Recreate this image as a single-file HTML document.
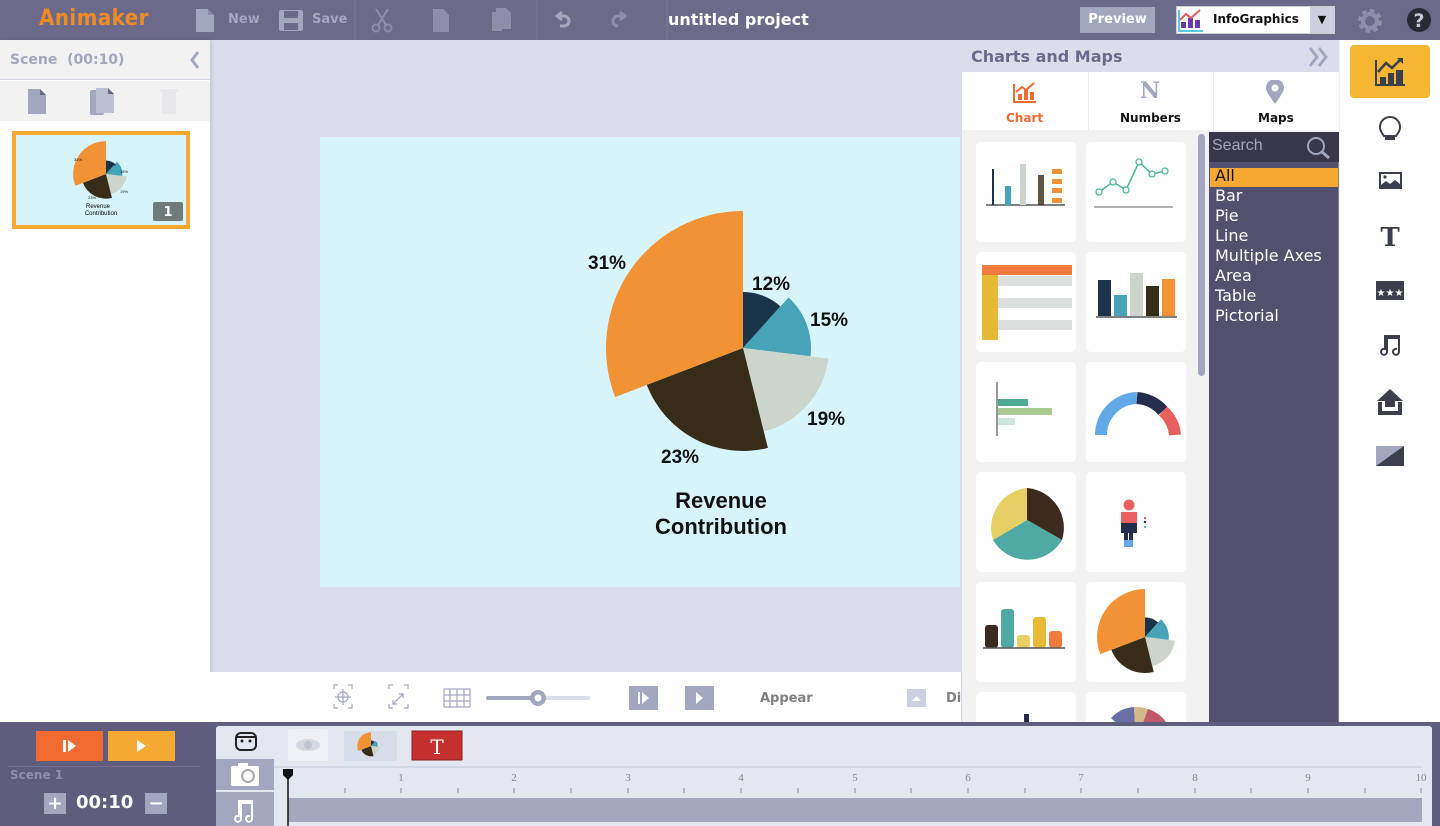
<!DOCTYPE html>
<html><head><meta charset="utf-8"><style>
*{margin:0;padding:0;box-sizing:border-box}
body{width:1440px;height:826px;overflow:hidden;position:relative;font-family:"DejaVu Sans","Liberation Sans",sans-serif;background:#dadeea}
.a{position:absolute}
.b{font-weight:bold}
</style></head><body>
<!-- top bar -->
<div class="a" style="left:0;top:0;width:1440px;height:40px;background:#6c6a8a"></div>
<div class="a b" style="left:39px;top:6px;font-size:22px;color:#f08a24;font-family:'DejaVu Sans Condensed','DejaVu Sans',sans-serif;letter-spacing:0.5px">Animaker</div>
<svg class="a" style="left:190px;top:0" width="480" height="40">
 <path d="M6 9h12l6 6v17H6z" fill="#a3a6bf"/><path d="M18 9l6 6h-6z" fill="#8a8ca8"/>
 <rect x="89" y="10" width="24" height="21" rx="2" fill="#a3a6bf"/><rect x="94" y="11" width="14" height="7" fill="#6c6a8a"/><rect x="94" y="23" width="14" height="7" fill="#6c6a8a"/>
 <line x1="165" y1="0" x2="165" y2="40" stroke="#7b7998"/>
 <path d="M186 9l10 16M198 9l-10 16" stroke="#8e8daa" stroke-width="2"/><circle cx="186" cy="28" r="3.5" fill="none" stroke="#8e8daa" stroke-width="2"/><circle cx="198" cy="28" r="3.5" fill="none" stroke="#8e8daa" stroke-width="2"/>
 <path d="M243 9h10l6 6v17h-16z" fill="#8e8daa"/>
 <path d="M306 8h10l5 5v16h-15z" fill="#8e8daa"/><path d="M302 12h10v19h-10z" fill="#8e8daa"/>
 <line x1="347" y1="0" x2="347" y2="40" stroke="#7b7998"/>
 <path d="M372 12l-5 4 5 4M367 16h7a5 5 0 0 1 0 10h-4" fill="none" stroke="#a3a6bf" stroke-width="3"/>
 <path d="M430 12l5 4-5 4M435 16h-7a5 5 0 0 0 0 10h0" fill="none" stroke="#8e8daa" stroke-width="3"/>
 <line x1="477" y1="0" x2="477" y2="40" stroke="#7b7998"/>
</svg>
<div class="a b" style="left:228px;top:12px;font-size:13px;color:#a3a6bf">New</div>
<div class="a b" style="left:312px;top:12px;font-size:13px;color:#a3a6bf">Save</div>
<div class="a b" style="left:668px;top:10px;font-size:16px;color:#fff">untitled project</div>
<div class="a b" style="left:1080px;top:7px;width:75px;height:26px;background:#a3a6bf;color:#fff;font-size:13px;text-align:center;line-height:26px">Preview</div>
<div class="a" style="left:1176px;top:6px;width:159px;height:28px;background:#fff;border:1px solid #ccc"></div>
<svg class="a" style="left:1178px;top:8px" width="26" height="24"><rect x="3" y="14" width="5" height="6" fill="#6a3aa8"/><rect x="10" y="10" width="5" height="10" fill="#6a3aa8"/><rect x="17" y="12" width="5" height="8" fill="#6a3aa8"/><path d="M2 12l6-6 5 4 9-8" fill="none" stroke="#e85a5a" stroke-width="2"/><path d="M1 2v21h24" fill="none" stroke="#5ac8e0" stroke-width="2"/></svg>
<div class="a b" style="left:1213px;top:12px;font-size:12px;color:#111">InfoGraphics</div>
<div class="a" style="left:1310px;top:7px;width:24px;height:26px;background:#ccd0de;font-size:11px;text-align:center;line-height:26px;color:#111">▼</div>
<svg class="a" style="left:1356px;top:7px" width="28" height="28"><circle cx="14" cy="14" r="9" fill="none" stroke="#8e8daa" stroke-width="6" stroke-dasharray="4 3"/><circle cx="14" cy="14" r="7" fill="none" stroke="#8e8daa" stroke-width="4"/></svg>
<svg class="a" style="left:1405px;top:6px" width="28" height="28"><circle cx="14" cy="14" r="12" fill="#2a2a35"/><text x="14" y="21" text-anchor="middle" font-family="DejaVu Sans" font-weight="bold" font-size="19" fill="#c8c8d6">?</text></svg>

<!-- left panel -->
<div class="a" style="left:0;top:40px;width:210px;height:682px;background:#fff;box-shadow:2px 0 4px rgba(0,0,0,.1)"></div>
<div class="a" style="left:0;top:40px;width:210px;height:40px;background:#f2f2f2;border-bottom:1px solid #d5d9e6"></div>
<div class="a b" style="left:10px;top:52px;font-size:14px;color:#a3a6bf">Scene&nbsp;&nbsp;(00:10)</div>
<svg class="a" style="left:188px;top:50px" width="14" height="20"><path d="M10 2L4 10l6 8" fill="none" stroke="#a3a6bf" stroke-width="3"/></svg>
<div class="a" style="left:0;top:81px;width:210px;height:40px;background:#f2f2f2"></div>
<svg class="a" style="left:0;top:81px" width="210" height="40"><path d="M28 8h12l6 6v19H28z" fill="#a3a6bf"/><path d="M40 8l6 6h-6z" fill="#6c6a8a"/><rect x="90" y="9" width="14" height="25" rx="2" fill="#a3a6bf"/><path d="M96 7h12l6 6v19H96z" fill="#bcc0d3"/><path d="M108 7l6 6h-6z" fill="#6c6a8a"/><rect x="162" y="10" width="14" height="23" fill="#e8e8ea"/><rect x="160" y="8" width="18" height="3" fill="#e8e8ea"/></svg>
<div class="a" style="left:12px;top:131px;width:178px;height:98px;border:4px solid #f5a832;background:#d6f4fa"></div>
<svg class="a" style="left:16px;top:135px" width="170" height="90" viewBox="0 0 170 90">
<g transform="translate(90,39) scale(0.24) translate(-743,-348)">
 <path d="M743 348L743 292A56 56 0 0 1 780.5 306.4Z" fill="#1c344b"/>
 <path d="M743 348L788.5 297.5A68 68 0 0 1 810.5 356.3Z" fill="#47a4b8"/>
 <path d="M743 348L828.4 358.5A86 86 0 0 1 763.8 431.4Z" fill="#ccd5cc"/>
 <path d="M743 348L767.9 447.9A103 103 0 0 1 646.8 384.9Z" fill="#372c17"/>
 <path d="M743 348L615.1 397.1A137 137 0 0 1 743 211Z" fill="#f19235"/>
</g>
<g font-size="4" font-family="Liberation Sans" fill="#111"><text x="58" y="26">31%</text><text x="92" y="31">12%</text><text x="104" y="38">15%</text><text x="104" y="58">19%</text><text x="72" y="64">23%</text></g>
<text x="82" y="73" font-size="6" text-anchor="middle" font-family="Liberation Sans">Revenue</text><text x="85" y="80" font-size="6" text-anchor="middle" font-family="Liberation Sans">Contribution</text>
<rect x="137" y="67" width="30" height="19" rx="2" fill="#6f7a7a"/><text x="152" y="81" font-size="13" font-weight="bold" fill="#fff" text-anchor="middle">1</text>
</svg>

<!-- stage -->
<div class="a" style="left:320px;top:137px;width:640px;height:450px;background:#d6f4fa"></div>
<svg class="a" style="left:0;top:0" width="960" height="600">
 <path d="M743 348L743 292A56 56 0 0 1 780.5 306.4Z" fill="#1c344b"/>
 <path d="M743 348L788.5 297.5A68 68 0 0 1 810.5 356.3Z" fill="#47a4b8"/>
 <path d="M743 348L828.4 358.5A86 86 0 0 1 763.8 431.4Z" fill="#ccd5cc"/>
 <path d="M743 348L767.9 447.9A103 103 0 0 1 646.8 384.9Z" fill="#372c17"/>
 <path d="M743 348L615.1 397.1A137 137 0 0 1 743 211Z" fill="#f19235"/>
 <g font-family="Liberation Sans" font-weight="bold" fill="#111" font-size="19">
 <text x="588" y="269">31%</text><text x="752" y="290">12%</text><text x="810" y="326">15%</text><text x="807" y="425">19%</text><text x="661" y="463">23%</text>
 <text x="721" y="508" text-anchor="middle" font-size="22">Revenue</text><text x="721" y="534" text-anchor="middle" font-size="22">Contribution</text></g>
</svg>

<!-- canvas bottom toolbar -->
<div class="a" style="left:210px;top:672px;width:751px;height:50px;background:#fff"></div>
<svg class="a" style="left:320px;top:680px" width="640" height="36">
 <g fill="none" stroke="#a3a6bf" stroke-width="1.2"><path d="M14 9v-4h4M28 5h4v4M32 24v4h-4M18 28h-4v-4"/><circle cx="23" cy="17" r="5"/><path d="M23 9v16M15 17h16"/>
 <path d="M69 9v-4h4M84 5h4v4M88 24v4h-4M73 28h-4v-4M73 24l10-10M79 14h4v4M73 20v4h4"/>
 <path d="M124 9h26v18h-26zM124 15h26M124 21h26M130 9v18M137 9v18M144 9v18"/></g>
 <line x1="168" y1="18" x2="268" y2="18" stroke="#dadeea" stroke-width="4" stroke-linecap="round"/><line x1="168" y1="18" x2="218" y2="18" stroke="#a3a6bf" stroke-width="4" stroke-linecap="round"/>
 <circle cx="218" cy="18" r="8" fill="#a3a6bf"/><circle cx="218" cy="18" r="3.5" fill="#fff"/>
 <rect x="309" y="6" width="29" height="24" fill="#a3a6bf"/><rect x="318" y="12" width="2" height="12" fill="#fff"/><path d="M322 12l7 6-7 6z" fill="#fff"/>
 <rect x="365" y="6" width="29" height="24" fill="#a3a6bf"/><path d="M376 12l7 6-7 6z" fill="#fff"/>
 <rect x="587" y="9" width="19" height="18" fill="#ccd0de"/><path d="M592 21l4.5-5 4.5 5z" fill="#fff"/>
</svg>
<div class="a b" style="left:760px;top:691px;font-size:13px;color:#808080">Appear</div>
<div class="a b" style="left:946px;top:691px;font-size:13px;color:#808080">Di</div>

<!-- charts panel -->
<div class="a" style="left:961px;top:40px;width:379px;height:682px;background:#f2f2f2;border-left:1px solid #d5d9e6"></div>
<div class="a" style="left:961px;top:40px;width:378px;height:32px;background:#dadeea"></div>
<div class="a b" style="left:971px;top:47px;font-size:16px;color:#6c6a8a">Charts and Maps</div>
<svg class="a" style="left:1307px;top:46px" width="24" height="22"><path d="M3 2l7 9-7 9M12 2l7 9-7 9" fill="none" stroke="#a3a6bf" stroke-width="3"/></svg>
<div class="a" style="left:962px;top:72px;width:377px;height:58px;background:#fff"></div>
<div class="a" style="left:1088px;top:72px;width:1px;height:58px;background:#eaeaea"></div>
<div class="a" style="left:1213px;top:72px;width:1px;height:58px;background:#eaeaea"></div>
<svg class="a" style="left:1012px;top:80px" width="26" height="24"><path d="M2 4v18h22" fill="none" stroke="#ef6b30" stroke-width="2"/><rect x="6" y="14" width="4" height="6" fill="#ef6b30"/><rect x="12" y="10" width="4" height="10" fill="#ef6b30"/><rect x="18" y="12" width="4" height="8" fill="#ef6b30"/><path d="M4 12l6-5 4 3 8-7" fill="none" stroke="#ef6b30" stroke-width="2"/></svg>
<div class="a b" style="left:1006px;top:111px;font-size:12px;color:#ef6b30">Chart</div>
<div class="a b" style="left:1140px;top:78px;font-size:22px;color:#a3a6bf;font-family:'DejaVu Serif',serif">N</div>
<div class="a b" style="left:1120px;top:111px;font-size:12px;color:#111">Numbers</div>
<svg class="a" style="left:1264px;top:80px" width="22" height="26"><path d="M11 24C4 14 2 11 2 8a9 9 0 0 1 18 0c0 3-2 6-9 16z" fill="#a3a6bf"/><circle cx="11" cy="8" r="3.5" fill="#fff"/></svg>
<div class="a b" style="left:1258px;top:111px;font-size:12px;color:#111">Maps</div>

<div class="a" style="left:1198px;top:134px;width:7px;height:242px;border-radius:4px;background:#a3a6bf"></div>
<svg class="a" style="left:976px;top:142px" width="210" height="580">
 <g fill="#fff"><rect x="0" y="0" width="100" height="100" rx="5"/><rect x="110" y="0" width="100" height="100" rx="5"/>
 <rect x="0" y="110" width="100" height="100" rx="5"/><rect x="110" y="110" width="100" height="100" rx="5"/>
 <rect x="0" y="220" width="100" height="100" rx="5"/><rect x="110" y="220" width="100" height="100" rx="5"/>
 <rect x="0" y="330" width="100" height="100" rx="5"/><rect x="110" y="330" width="100" height="100" rx="5"/>
 <rect x="0" y="440" width="100" height="100" rx="5"/><rect x="110" y="440" width="100" height="100" rx="5"/>
 <rect x="0" y="550" width="100" height="100" rx="5"/><rect x="110" y="550" width="100" height="100" rx="5"/></g>
 <line x1="10" y1="63" x2="89" y2="63" stroke="#555" stroke-width="1.5"/>
 <rect x="16" y="27" width="2" height="36" fill="#1c344b"/><rect x="29" y="44" width="6" height="19" fill="#47a4b8"/><rect x="44" y="22" width="6" height="41" fill="#ccd5cc"/><rect x="62" y="33" width="6" height="30" fill="#372c17" opacity=".8"/>
 <g fill="#f19235"><rect x="76" y="27" width="10" height="5"/><rect x="76" y="37" width="10" height="5"/><rect x="76" y="46" width="10" height="5"/><rect x="76" y="56" width="10" height="5"/></g>
 <line x1="118" y1="65" x2="197" y2="65" stroke="#999" stroke-width="1.5"/>
 <polyline points="123,50 137,40 150,48 163,20 176,32 189,29" fill="none" stroke="#4fb89a" stroke-width="1.5"/>
 <g fill="#fff" stroke="#4fb89a" stroke-width="1.3"><circle cx="123" cy="50" r="3"/><circle cx="137" cy="40" r="3"/><circle cx="150" cy="48" r="3"/><circle cx="163" cy="20" r="3"/><circle cx="176" cy="32" r="3"/><circle cx="189" cy="29" r="3"/></g>
 <rect x="6" y="123" width="90" height="10" fill="#ef7b3e"/><rect x="6" y="133" width="16" height="65" fill="#e8b934"/>
 <g fill="#dbe0de"><rect x="22" y="134" width="74" height="10"/><rect x="22" y="156" width="74" height="10"/><rect x="22" y="178" width="74" height="10"/></g>
 <rect x="122" y="138" width="13" height="36" fill="#1c344b"/><rect x="138" y="153" width="13" height="21" fill="#47a4b8"/><rect x="154" y="131" width="13" height="43" fill="#ccd5cc"/><rect x="170" y="144" width="13" height="30" fill="#372c17"/><rect x="186" y="137" width="13" height="37" fill="#f19235"/>
 <line x1="120" y1="175" x2="201" y2="175" stroke="#555" stroke-width="1.5"/>
 <line x1="21" y1="240" x2="21" y2="294" stroke="#777" stroke-width="1.5"/><rect x="22" y="257" width="30" height="7" fill="#4fa890"/><rect x="22" y="266" width="54" height="7" fill="#a8c98f"/><rect x="22" y="276" width="17" height="7" fill="#cde5df"/>
 <path d="M125 293A37 37 0 0 1 161 256" fill="none" stroke="#63a8e6" stroke-width="12"/><path d="M161 256A37 37 0 0 1 187 269" fill="none" stroke="#262c4b" stroke-width="12"/><path d="M187 269A37 37 0 0 1 199 293" fill="none" stroke="#e85f5f" stroke-width="12"/>
 <path d="M51 378L51 346A40 40 0 0 1 86 398Z" fill="#3c2a1f"/><path d="M51 378L86 398A40 40 0 0 1 17 398Z" fill="#4fa9a3"/><path d="M51 378L17 398A40 40 0 0 1 51 346Z" fill="#e6cf63"/>
 <circle cx="153" cy="363" r="5.5" fill="#e86060"/><rect x="145" y="370" width="16" height="11" fill="#e86060"/><rect x="145" y="381" width="16" height="10" fill="#262c4b"/><rect x="148" y="391" width="4" height="12" fill="#262c4b"/><rect x="153" y="391" width="4" height="12" fill="#262c4b"/><rect x="148" y="398" width="9" height="7" fill="#63a8e6"/>
 <circle cx="169" cy="376" r="1.2" fill="#e86060"/><circle cx="169" cy="380" r="1.2" fill="#262c4b"/><circle cx="169" cy="385" r="1.2" fill="#63a8e6"/>
 <g><rect x="9" y="483" width="13" height="23" rx="3" fill="#3c2a1f"/><rect x="25" y="467" width="13" height="39" rx="3" fill="#4fa9a3"/><rect x="41" y="493" width="13" height="13" rx="3" fill="#e6cf63"/><rect x="57" y="475" width="13" height="31" rx="3" fill="#e8b934"/><rect x="73" y="489" width="13" height="17" rx="3" fill="#ef7b3e"/></g>
 <line x1="7" y1="506" x2="89" y2="506" stroke="#555" stroke-width="1.5"/>
 <g transform="translate(169,495) scale(0.35) translate(-743,-348)">
 <path d="M743 348L743 292A56 56 0 0 1 780.5 306.4Z" fill="#1c344b"/><path d="M743 348L788.5 297.5A68 68 0 0 1 810.5 356.3Z" fill="#47a4b8"/><path d="M743 348L828.4 358.5A86 86 0 0 1 763.8 431.4Z" fill="#ccd5cc"/><path d="M743 348L767.9 447.9A103 103 0 0 1 646.8 384.9Z" fill="#372c17"/><path d="M743 348L615.1 397.1A137 137 0 0 1 743 211Z" fill="#f19235"/></g>
 <rect x="48" y="572" width="5" height="10" fill="#262c4b"/>
 <path d="M160 600L135 576A35 35 0 0 1 158 565Z" fill="#6870a3"/><path d="M160 600L158 565A35 35 0 0 1 172 567Z" fill="#d4b88a"/><path d="M160 600L172 567A35 35 0 0 1 190 580Z" fill="#c05a6a"/>
</svg>

<!-- category list -->
<div class="a" style="left:1209px;top:132px;width:130px;height:590px;background:#52506e;border-right:1px solid #888"></div>
<div class="a" style="left:1209px;top:132px;width:130px;height:30px;background:#37364a"></div>
<div class="a" style="left:1212px;top:137px;font-size:16px;color:#a3a6bf;font-family:'Liberation Sans',sans-serif">Search</div>
<svg class="a" style="left:1306px;top:136px" width="26" height="24"><circle cx="10" cy="10" r="8" fill="none" stroke="#a3a6bf" stroke-width="2"/><path d="M16 16l7 6" stroke="#a3a6bf" stroke-width="3"/></svg>
<div class="a" style="left:1210px;top:168px;width:128px;height:19px;background:#f5a832"></div>
<div class="a" style="left:1215px;top:166px;font-size:16px;line-height:20px;color:#fff;font-family:'DejaVu Sans',sans-serif">
<div style="color:#111">All</div><div>Bar</div><div>Pie</div><div>Line</div><div>Multiple Axes</div><div>Area</div><div>Table</div><div>Pictorial</div></div>

<!-- right sidebar -->
<div class="a" style="left:1340px;top:40px;width:100px;height:682px;background:#fff"></div>
<div class="a" style="left:1350px;top:45px;width:80px;height:53px;background:#f5b731;border-radius:4px"></div>
<svg class="a" style="left:1340px;top:40px" width="100" height="440">
 <g fill="#3a3f4b">
 <path d="M35 20v26h30v-2H37V20z"/><rect x="40" y="37" width="6" height="7"/><rect x="48" y="33" width="6" height="11"/><rect x="56" y="30" width="7" height="14"/>
 </g>
 <path d="M38 32l8-9 6 5 9-9" fill="none" stroke="#3a3f4b" stroke-width="2.5"/><path d="M57 18h6v6z" fill="#3a3f4b"/>
 <path d="M44 96c-3-4-4-6-4-9a10 10 0 0 1 20 0c0 3-1 5-4 9z" fill="none" stroke="#3a3f4b" stroke-width="2"/><rect x="45" y="96" width="10" height="4" fill="#3a3f4b"/>
 <rect x="39" y="132" width="23" height="17" fill="#3a3f4b"/><path d="M41 134h19v10l-5-4-5 4-4-3-5 4z" fill="#fff"/><circle cx="45" cy="137" r="1.6" fill="#3a3f4b"/>
 <text x="50" y="206" text-anchor="middle" font-family="DejaVu Serif" font-weight="bold" font-size="26" fill="#3a3f4b">T</text>
 <rect x="36" y="241" width="28" height="19" fill="#3a3f4b"/><text x="50" y="256" text-anchor="middle" font-size="10" fill="#fff">★★★</text>
 <path d="M47 296v16a3 3 0 1 1-2-3v-13h14v16a3 3 0 1 1-2-3" fill="none" stroke="#3a3f4b" stroke-width="2"/><rect x="46" y="296" width="14" height="3" fill="#3a3f4b"/>
 <path d="M50 349l-13 12h8v6h10v-6h8z" fill="#3a3f4b"/><path d="M38 362v13h24v-13h-4v9h-16v-9z" fill="#3a3f4b"/>
 <rect x="36" y="406" width="28" height="20" fill="#a3a6bf"/><path d="M36 426L64 406v20z" fill="#3a3f4b"/>
</svg>

<!-- timeline -->
<div class="a" style="left:0;top:722px;width:1440px;height:104px;background:#5f5d7e"></div>
<div class="a" style="left:36px;top:731px;width:67px;height:30px;background:#ef6b30"></div>
<div class="a" style="left:108px;top:731px;width:67px;height:30px;background:#f5a832"></div>
<svg class="a" style="left:36px;top:731px" width="140" height="30"><rect x="27" y="9" width="3" height="12" fill="#fff"/><path d="M32 9l8 6-8 6z" fill="#fff"/><path d="M101 9l9 6-9 6z" fill="#fff"/></svg>
<div class="a" style="left:8px;top:766px;width:192px;height:1px;background:#757394"></div>
<div class="a b" style="left:10px;top:768px;font-size:12px;color:#8e8daa">Scene 1</div>
<div class="a" style="left:44px;top:793px;width:22px;height:21px;background:#a3a6bf;color:#fff;font-size:18px;text-align:center;line-height:21px;font-weight:bold">+</div>
<div class="a b" style="left:76px;top:792px;font-size:18px;color:#fff">00:10</div>
<div class="a" style="left:145px;top:793px;width:22px;height:21px;background:#a3a6bf;color:#fff;font-size:18px;text-align:center;line-height:21px;font-weight:bold">−</div>
<div class="a" style="left:216px;top:726px;width:1216px;height:100px;background:#e3e7f0;border-radius:3px 3px 0 0"></div>
<div class="a" style="left:216px;top:759px;width:58px;height:31px;background:#a3a6bf"></div>
<div class="a" style="left:216px;top:792px;width:58px;height:34px;background:#a3a6bf"></div>
<div class="a" style="left:274px;top:766px;width:1148px;height:2px;background:#d3d8e4"></div>
<svg class="a" style="left:216px;top:726px" width="1220" height="100">
 <rect x="20" y="7" width="20" height="17" rx="5" fill="none" stroke="#222" stroke-width="2"/><circle cx="26" cy="15" r="1.5" fill="#222"/><circle cx="34" cy="15" r="1.5" fill="#222"/><path d="M21 11h18" stroke="#222" stroke-width="2"/>
 <rect x="72" y="3" width="40" height="32" rx="2" fill="#eef0f4"/><ellipse cx="92" cy="19" rx="12" ry="6" fill="#d5d8de"/><circle cx="92" cy="19" r="4" fill="#bfc3cb"/>
 <rect x="128" y="5" width="53" height="30" fill="#d6dce8"/>
 <g transform="translate(155,20) scale(0.1) translate(-743,-348)"><path d="M743 348L743 292A56 56 0 0 1 780.5 306.4Z" fill="#1c344b"/><path d="M743 348L788.5 297.5A68 68 0 0 1 810.5 356.3Z" fill="#47a4b8"/><path d="M743 348L828.4 358.5A86 86 0 0 1 763.8 431.4Z" fill="#ccd5cc"/><path d="M743 348L767.9 447.9A103 103 0 0 1 646.8 384.9Z" fill="#372c17"/><path d="M743 348L615.1 397.1A137 137 0 0 1 743 211Z" fill="#f19235"/></g>
 <rect x="196" y="5" width="50" height="29" fill="#c4302e" stroke="#8a2020"/><text x="221" y="28" text-anchor="middle" font-family="DejaVu Serif" font-size="20" fill="#fff">T</text>
 <rect x="15" y="40" width="28" height="20" rx="2" fill="#fff"/><rect x="22" y="37" width="10" height="4" fill="#fff"/><circle cx="32" cy="50" r="6" fill="none" stroke="#aaa" stroke-width="2"/>
 <path d="M25 75v18a3 3 0 1 1-2-3v-15h13v18a3 3 0 1 1-2-3" fill="none" stroke="#fff" stroke-width="2"/><rect x="24" y="75" width="13" height="3" fill="#fff"/>
 <rect x="72" y="72" width="1134" height="24" fill="#a3a8bf"/>
 <g font-family="Liberation Serif" font-size="11" fill="#888" text-anchor="middle">
 <text x="185" y="55">1</text><text x="298" y="55">2</text><text x="412" y="55">3</text><text x="525" y="55">4</text><text x="639" y="55">5</text><text x="752" y="55">6</text><text x="865" y="55">7</text><text x="979" y="55">8</text><text x="1092" y="55">9</text><text x="1205" y="55">10</text></g>
 <g stroke="#888" stroke-width="1">
 <path d="M129 62v5M185 62v5M242 62v5M298 62v5M355 62v5M412 62v5M468 62v5M525 62v5M582 62v5M639 62v5M695 62v5M752 62v5M809 62v5M865 62v5M922 62v5M979 62v5M1035 62v5M1092 62v5M1149 62v5M1205 62v5"/></g>
 <line x1="72" y1="48" x2="72" y2="100" stroke="#111" stroke-width="1.5"/><path d="M67 43h10v6l-5 5-5-5z" fill="#111"/>
</svg>
</body></html>
